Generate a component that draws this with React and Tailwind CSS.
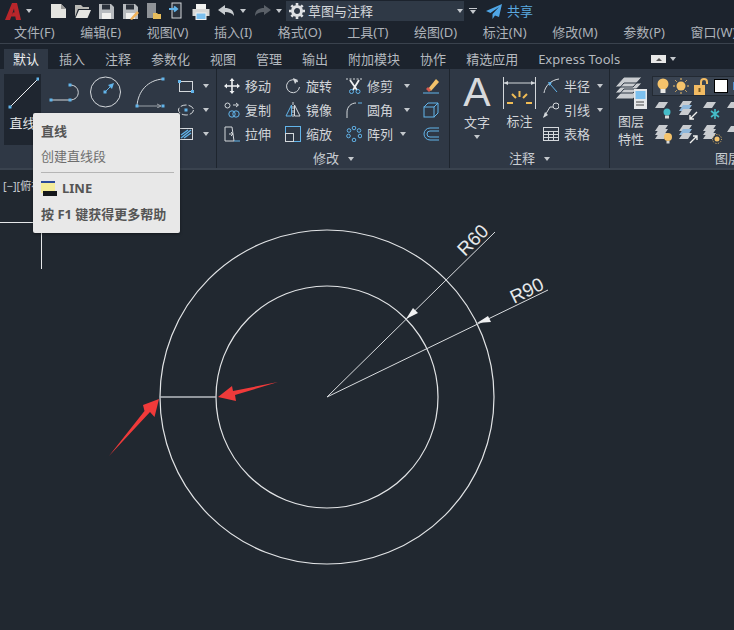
import React from "react";

const menus = ["文件(F)", "编辑(E)", "视图(V)", "插入(I)", "格式(O)", "工具(T)", "绘图(D)", "标注(N)", "修改(M)", "参数(P)", "窗口(W)"];
const tabs = ["插入", "注释", "参数化", "视图", "管理", "输出", "附加模块", "协作", "精选应用", "Express Tools"];

const BLUE = "#62b4ea";
const LINE = "#d4d8dc";

const Ico = ({ w = 16, h = 16, className = "", children }) => (
  <svg width={w} height={h} viewBox={`0 0 ${w} ${h}`} fill="none" stroke={LINE} strokeWidth="1" className={`shrink-0 ${className}`}>
    {children}
  </svg>
);

const Caret = ({ className = "" }) => (
  <span className={`inline-block w-0 h-0 border-x-[3.5px] border-x-transparent border-t-[4px] border-t-[#c4c8cd] ${className}`} />
);

const Grip = ({ x, y }) => <rect x={x - 1.5} y={y - 1.5} width="3" height="3" fill={BLUE} stroke="none" />;

const Logo = () => (
  <svg width="16" height="17" viewBox="0 0 16 17" className="shrink-0">
    <path d="M0 17 L7 0 H12 L16 17 H11 L10.3 13.5 H6 L8 9.5 H9.5 L9 5.5 L5 17 Z" fill="#b8262b" />
  </svg>
);

const NewDoc = () => (
  <Ico w={17} h={16}><path d="M1 1 H11 L16 6 V15 H1 Z" fill="#e4e4e0" stroke="none" /><path d="M11 1 V6 H16" fill="#9a9a98" stroke="none" /></Ico>
);
const OpenDoc = () => (
  <Ico w={17} h={16}><path d="M1 14 V2 H7 L9 4 H15 V6 H4 Z" fill="#b9b9b5" stroke="none" /><path d="M1.5 15 L5 7 H17 L13.5 15 Z" fill="#e6e6e2" stroke="none" /></Ico>
);
const Save = ({ pen }) => (
  <Ico w={17} h={17}>
    <path d="M1 1 H13 L16 4 V16 H1 Z" fill="#b7bbbf" stroke="none" />
    <rect x="4" y="1.5" width="8" height="5" fill="#2a313b" stroke="none" />
    <rect x="4" y="10" width="9" height="6" fill="#f0f0ee" stroke="none" />
    {pen && <path d="M8 16 L15 8 L17 10 L10 17 Z" fill="#f2b35a" stroke="none" />}
  </Ico>
);
const Phone = ({ folder }) => (
  <Ico w={16} h={18}>
    <rect x={folder ? 1 : 3} y="1" width="9" height="15" fill={folder ? "#8f9398" : "#2a313b"} stroke={folder ? "none" : "#d4d8dc"} />
    {folder ? <path d="M7 11 H11 L12 12 H15 V17 H7 Z" fill="#e8bd5c" stroke="none" /> : <path d="M0 7 H7 M5 4.5 L8 7 L5 9.5" stroke={BLUE} strokeWidth="2" />}
  </Ico>
);
const Printer = () => (
  <Ico w={18} h={17}>
    <rect x="4" y="1" width="10" height="5" fill="#f2f2f0" stroke="none" />
    <rect x="0.5" y="6" width="17" height="7" fill="#d8d8d6" stroke="none" />
    <rect x="4" y="10" width="10" height="6.5" fill="#7cc0ee" stroke="#f2f2f0" />
  </Ico>
);
const Undo = ({ redo }) => (
  <Ico w={17} h={12} className={redo ? "-scale-x-100" : ""}>
    <path d="M0 5 L7 0 V3 C12 3 16 5 16 11 C14 8 11 7 7 7 V10 Z" fill={redo ? "#5a6068" : "#c8ccd0"} stroke="none" />
  </Ico>
);
const Gear = () => (
  <svg width="16" height="16" viewBox="0 0 16 16" className="shrink-0">
    <circle cx="8" cy="8" r="4.5" fill="none" stroke="#dfe1e4" strokeWidth="3" />
    <path d="M8 0 V16 M0 8 H16 M2.3 2.3 L13.7 13.7 M13.7 2.3 L2.3 13.7" stroke="#dfe1e4" strokeWidth="2.6" strokeDasharray="2.6 10.8" />
  </svg>
);
const Plane = () => (
  <svg width="16" height="15" viewBox="0 0 16 15" className="shrink-0">
    <path d="M16 0 L0 7 L4.5 9 L13 3 L6.5 10 V15 L9 11.5 L13 13 Z" fill="#4fa6e6" />
  </svg>
);

const Tool = ({ icon, label, caret, w = "w-[62px]", capGap = "ml-[7px]" }) => (
  <div className={`flex items-center h-6 ${w}`}>
    <span className="w-[16px] h-[18px] flex items-center justify-center shrink-0">{icon}</span>
    <span className="ml-[5px] text-[13px] leading-none whitespace-nowrap text-[#d2d5d9]">{label}</span>
    {caret && <Caret className={capGap} />}
  </div>
);

const PanelTitle = ({ label, caret, className = "" }) => (
  <div className={`absolute bottom-0 h-[19px] flex items-center gap-[7px] whitespace-nowrap text-[13px] text-[#c9cdd2] leading-none ${className}`}>
    {label}
    {caret && <Caret className="ml-[2px]" />}
  </div>
);

const iconsMove = (
  <Ico><path d="M8 1 V15 M1 8 H15" strokeWidth="1.6" stroke="#eef0f2" /><path d="M8 0 L10.5 3 H5.5 Z M8 16 L10.5 13 H5.5 Z M0 8 L3 5.5 V10.5 Z M16 8 L13 5.5 V10.5 Z" fill="#eef0f2" stroke="none" /></Ico>
);
const iconsCopy = (
  <Ico><rect x="1" y="1" width="5" height="5" rx="2.5" /><circle cx="8" cy="12" r="3.2" stroke={BLUE} /><circle cx="12" cy="12" r="3.2" stroke={BLUE} /><path d="M9 3 H14 M12 1 L14.5 3 L12 5" /></Ico>
);
const iconsStretch = (
  <Ico><path d="M1 1 H8 L10 15 H1 Z" /><path d="M5 8 H9 M7 6 L9 8 L7 10" /><path d="M10 15 H16" stroke={BLUE} /></Ico>
);
const iconsRotate = (
  <Ico><path d="M13 4 A6.5 6.5 0 1 0 14.5 9" /><path d="M8 0 L13 2 L10 6 Z" fill={LINE} stroke="none" /></Ico>
);
const iconsMirror = (
  <Ico><path d="M8 0 V16" strokeDasharray="3 1" /><path d="M6.5 3 V14 H1 Z" stroke={BLUE} /><path d="M9.5 3 V14 H15 Z" /></Ico>
);
const iconsScale = (
  <Ico><rect x="0.5" y="0.5" width="15" height="15" stroke={BLUE} /><rect x="0.5" y="7.5" width="8" height="8" /></Ico>
);
const iconsTrim = (
  <Ico w={17}><path d="M0 1 H16" strokeDasharray="2 1.5" /><path d="M4 2 L11 12 M13 2 L7 12" strokeWidth="1.8" stroke="#eef0f2" /><circle cx="5.5" cy="13.5" r="2" stroke={BLUE} /><circle cx="12" cy="13.5" r="2" stroke={BLUE} /></Ico>
);
const iconsFillet = (
  <Ico><path d="M1 16 V10 C1 5 5 1 10 1" /><path d="M12 1 H16" stroke={BLUE} /></Ico>
);
const iconsArray = (
  <Ico>
    {[[8, 2], [13, 4.5], [14, 10], [8, 14], [2.5, 10], [3, 4.5]].map(([x, y], i) => (
      <circle key={i} cx={x} cy={y} r="1.8" stroke={BLUE} />
    ))}
  </Ico>
);
const iconsEraser = (
  <Ico w={17}><path d="M5 11 L13 1 L16 4 L8 13 Z" fill="#f2c26a" stroke="none" /><path d="M3 11 L5 9 L8 12 L6 14 Z" fill="#d8584e" stroke="none" /><path d="M0 15 H16" stroke={BLUE} /></Ico>
);
const iconsBox = (
  <Ico w={17}><rect x="1" y="5" width="10" height="10" stroke={BLUE} /><path d="M1 5 L5 1 H15 L11 5 M15 1 V11 L11 15" stroke={BLUE} /></Ico>
);
const iconsOffset = (
  <Ico w={17}><path d="M16 2 H7 A6 6 0 0 0 7 14 H16 M16 5 H7 A3 3 0 0 0 7 11 H16" stroke={BLUE} /></Ico>
);
const iconsRadius = (
  <Ico><path d="M1 15 C2 8 8 2 16 1" /><path d="M7 6 L14 14" stroke={BLUE} /><path d="M5 4 L9 4.5 L6.5 8 Z" fill={BLUE} stroke="none" /></Ico>
);
const iconsLeader = (
  <Ico><path d="M1 15 L7 5 H10" /><circle cx="13" cy="4" r="3" /><path d="M0 16 L2 10 L5 13 Z" fill={LINE} stroke="none" /></Ico>
);
const iconsTable = (
  <Ico><rect x="0.5" y="1.5" width="15" height="13" /><path d="M0.5 5.5 H15.5 M0.5 8.5 H15.5 M0.5 11.5 H15.5 M5.5 5.5 V14.5 M10.5 5.5 V14.5" /></Ico>
);

const Bulb = ({ color = "#f5c36b", base = "#e8e8e6" }) => (
  <svg width="14" height="16" viewBox="0 0 14 16" className="shrink-0">
    <circle cx="7" cy="6" r="5.5" fill={color} />
    <rect x="4.5" y="11" width="5" height="4" fill={base} />
  </svg>
);
const Sun = () => (
  <svg width="16" height="16" viewBox="0 0 16 16" className="ml-[3px] shrink-0">
    <circle cx="8" cy="8" r="4.5" fill="#f5c36b" />
    <path d="M8 0 V2 M8 14 V16 M0 8 H2 M14 8 H16 M2.3 2.3 L3.7 3.7 M12.3 12.3 L13.7 13.7 M13.7 2.3 L12.3 3.7 M3.7 12.3 L2.3 13.7" stroke="#f5c36b" />
  </svg>
);
const Lock = () => (
  <svg width="15" height="17" viewBox="0 0 15 17" className="ml-[5px] shrink-0">
    <rect x="0" y="7" width="11" height="10" fill="#f2bb63" />
    <path d="M7 7 V4 A3 3 0 0 1 13 4 V6" fill="none" stroke="#f2bb63" strokeWidth="2" />
    <rect x="4.5" y="10" width="2" height="4" fill="#7a5a20" />
  </svg>
);

const Plate = ({ y = 0, fill = "#c9ccd0" }) => (
  <path d={`M1 ${y + 6} L5 ${y} H14 L10 ${y + 6} Z`} fill={fill} />
);
const LayerSm = ({ badge }) => (
  <svg width="20" height="20" viewBox="0 0 20 20" className="shrink-0">
    {badge === "teal" && <><Plate y={1} /><circle cx="13" cy="11" r="3.5" fill="#45bcc8" /><rect x="11" y="14.5" width="4" height="3" fill="#d8d8d6" /></>}
    {badge === "snow" && <><Plate y={1} /><path d="M13 8 V18 M9 10 L17 16 M17 10 L9 16" stroke="#45bcc8" strokeWidth="1.6" /></>}
    {badge === "bulb" && <><Plate y={0} /><Plate y={4} /><Plate y={8} /><circle cx="14" cy="12" r="4" fill="#f5c36b" /><rect x="12.5" y="16" width="3" height="2.5" fill="#d8d8d6" /></>}
    {badge === "sun" && <><Plate y={0} /><Plate y={4} /><Plate y={8} /><circle cx="15" cy="14" r="2.5" fill="#f5c36b" /><circle cx="15" cy="14" r="4.5" fill="none" stroke="#f5c36b" strokeDasharray="1 1.5" /></>}
    {badge === "down" && <><Plate y={0} /><Plate y={4} fill="#8fb8dc" /><Plate y={8} /><path d="M19 11 L12 18 M12 14 V18 H16" stroke="#f0f0ee" strokeWidth="1.4" fill="none" /></>}
    {badge === "up" && <><Plate y={0} /><Plate y={4} fill="#8fb8dc" /><Plate y={8} /><path d="M12 18 L19 11 M15 11 H19 V15" stroke="#f0f0ee" strokeWidth="1.4" fill="none" /></>}
    {!badge && <Plate y={1} />}
  </svg>
);

const TopBar = () => (
  <div className="h-[22px] flex items-center pl-[5px] bg-[#1c232d]">
    <Logo />
    <Caret className="ml-[5px]" />
    <div className="ml-[18px] flex items-center gap-[7px]">
      <NewDoc />
      <OpenDoc />
      <Save />
      <Save pen />
      <Phone folder />
      <Phone />
      <Printer />
    </div>
    <span className="ml-[8px]"><Undo /></span>
    <Caret className="ml-[5px]" />
    <span className="ml-[8px]"><Undo redo /></span>
    <Caret className="ml-[5px]" />
    <div className="ml-[4px] w-[178px] h-[20px] flex items-center pl-[3px] pr-[1px] bg-[#2f3946]">
      <Gear />
      <span className="ml-[3px] text-[13px] leading-none text-[#d4d7db]">草图与注释</span>
      <Caret className="ml-auto" />
    </div>
    <div className="ml-[5px] flex flex-col items-center gap-[1px]">
      <span className="w-[8px] h-[1.5px] bg-[#c4c8cd]" />
      <Caret />
    </div>
    <span className="ml-[9px]"><Plane /></span>
    <span className="ml-[5px] text-[13px] leading-none text-[#5aa9e0]">共享</span>
  </div>
);

const MenuBar = () => (
  <div className="h-[22px] flex items-center pl-[14px] gap-[25.6px] bg-[#1c232d] border-b border-[#3a424d] whitespace-nowrap">
    {menus.map((m) => (
      <span key={m} className="text-[13px] leading-none text-[#adb2b9]">{m}</span>
    ))}
  </div>
);

const TabBar = () => (
  <div className="h-[25px] flex items-end pl-[4px] bg-[#1c232d] whitespace-nowrap">
    <div className="h-[20px] w-[44px] flex items-center justify-center bg-[#2f3845] text-[13px] leading-none text-[#eceef0]">默认</div>
    <div className="ml-[11px] h-[20px] flex items-center gap-[20px]">
      {tabs.map((t) => (
        <span key={t} className="text-[13px] leading-none text-[#b4b9bf]">{t}</span>
      ))}
    </div>
    <div className="ml-[31px] h-[20px] flex items-center">
      <span className="w-[15px] h-[8px] bg-[#e8e8e8] flex items-center justify-center">
        <span className="w-0 h-0 border-x-[3px] border-x-transparent border-b-[3px] border-b-[#555]" />
      </span>
      <Caret className="ml-[4px]" />
    </div>
  </div>
);

const DrawPanel = () => (
  <div className="relative w-[217px] shrink-0 border-r border-[#1e252e] flex pl-[4px] pt-[5px]">
    <div className="w-[37px] h-[71px] bg-[#1f2630] flex flex-col items-center pt-[3px] shrink-0">
      <svg width="33" height="33" viewBox="0 0 33 33" fill="none" className="shrink-0">
        <path d="M4 30 L33 1" stroke="#eef0f2" />
        <Grip x={4} y={30} />
        <Grip x={32} y={2} />
      </svg>
      <span className="mt-[7px] text-[13px] leading-none text-[#e4e6e8] whitespace-nowrap">直线</span>
    </div>
    <svg width="34" height="34" viewBox="0 0 34 34" fill="none" className="ml-[7px] mt-[5px] shrink-0" stroke={LINE}>
      <path d="M3 21 H22 M22 6 C33 6 33 21 22 21" />
      <Grip x={3} y={21} /><Grip x={22} y={21} /><Grip x={22} y={6} />
    </svg>
    <svg width="34" height="34" viewBox="0 0 34 34" fill="none" className="ml-[6px] shrink-0" stroke={LINE}>
      <circle cx="17.5" cy="18" r="15" />
      <path d="M17 18 L24 11" stroke={BLUE} />
      <path d="M26 9 L20 11 L24 15 Z" fill={BLUE} stroke="none" />
      <Grip x={17} y={18} />
    </svg>
    <svg width="36" height="34" viewBox="0 0 36 34" fill="none" className="ml-[10px] shrink-0" stroke={LINE}>
      <path d="M5 32 C6 17 16 6 31 5" />
      <path d="M5 32 H29 M25 30 L29 32 L25 34" stroke="#9aa0a8" />
      <Grip x={5} y={32} /><Grip x={31} y={5} /><Grip x={31} y={32} />
    </svg>
    <div className="ml-[10px] flex flex-col">
      <div className="flex items-center h-6 gap-[9px]">
        <Ico><rect x="1.5" y="3.5" width="13" height="10" /><Grip x={1.5} y={3.5} /><Grip x={14.5} y={13.5} /></Ico>
        <Caret />
      </div>
      <div className="flex items-center h-6 gap-[9px]">
        <Ico><ellipse cx="8" cy="8" rx="7.5" ry="5" strokeDasharray="6 2" /><Grip x={8} y={8} /></Ico>
        <Caret />
      </div>
      <div className="flex items-center h-6 gap-[9px]">
        <Ico><rect x="1.5" y="2.5" width="13" height="11" /><path d="M3 12 L13 4 M3 9 L10 4 M6 12 L13 7" stroke={BLUE} strokeWidth="1.4" /></Ico>
        <Caret />
      </div>
    </div>
  </div>
);

const ModifyPanel = () => (
  <div className="relative w-[233px] shrink-0 border-r border-[#1e252e] flex pl-[7px] pt-[5px]">
    <div className="w-[61px] shrink-0">
      <Tool icon={iconsMove} label="移动" />
      <Tool icon={iconsCopy} label="复制" />
      <Tool icon={iconsStretch} label="拉伸" />
    </div>
    <div className="w-[61px] shrink-0">
      <Tool icon={iconsRotate} label="旋转" />
      <Tool icon={iconsMirror} label="镜像" />
      <Tool icon={iconsScale} label="缩放" />
    </div>
    <div className="w-[77px] shrink-0">
      <Tool w="w-[77px]" icon={iconsTrim} label="修剪" caret capGap="ml-[11px]" />
      <Tool w="w-[77px]" icon={iconsFillet} label="圆角" caret capGap="ml-[11px]" />
      <Tool w="w-[77px]" icon={iconsArray} label="阵列" caret capGap="ml-[7px]" />
    </div>
    <div className="flex flex-col">
      <div className="h-6 flex items-center">{iconsEraser}</div>
      <div className="h-6 flex items-center">{iconsBox}</div>
      <div className="h-6 flex items-center">{iconsOffset}</div>
    </div>
    <PanelTitle label="修改" caret className="left-[96px]" />
  </div>
);

const AnnotatePanel = () => (
  <div className="relative w-[160px] shrink-0 border-r border-[#1e252e] flex pl-[13px]">
    <div className="w-[28px] flex flex-col items-center shrink-0 pt-[5px]">
      <span className="h-[36px] text-[41px] leading-[36px] font-['Liberation_Sans',sans-serif] text-[#d7d9dc]">A</span>
      <span className="mt-[6px] text-[13px] leading-none text-[#d2d5d9] whitespace-nowrap">文字</span>
      <Caret className="mt-[6px]" />
    </div>
    <div className="ml-[12px] w-[33px] flex flex-col items-center shrink-0 pt-[8px]">
      <svg width="33" height="32" viewBox="0 0 33 32" fill="none" stroke={LINE} className="shrink-0">
        <path d="M0.5 0 V32 M32.5 0 V32 M1 6 H32" />
        <path d="M1 6 L5 4 V8 Z M32 6 L28 4 V8 Z" fill={LINE} stroke="none" />
        <path d="M16.5 14 V20 M9 17 L13 21 M24 17 L20 21 M4 26 H10 M23 26 H29" stroke="#f0bc55" strokeWidth="2" />
      </svg>
      <span className="mt-[6px] text-[13px] leading-none text-[#d2d5d9] whitespace-nowrap">标注</span>
    </div>
    <div className="ml-[7px] pt-[5px]">
      <Tool w="w-[64px]" icon={iconsRadius} label="半径" caret capGap="ml-[7px]" />
      <Tool w="w-[64px]" icon={iconsLeader} label="引线" caret capGap="ml-[7px]" />
      <Tool w="w-[64px]" icon={iconsTable} label="表格" />
    </div>
    <PanelTitle label="注释" caret className="left-[59px]" />
  </div>
);

const LayerPanel = () => (
  <div className="relative flex-1 flex pl-[5px] overflow-hidden">
    <div className="w-[32px] h-[77px] flex flex-col items-center shrink-0 pt-[7px] overflow-hidden">
      <svg width="32" height="35" viewBox="0 0 32 35" className="shrink-0">
        <path d="M0 11 L9 1 H27 L18 11 Z M0 17 L9 7 H27 L18 17 Z M0 23 L9 13 H27 L18 23 Z" fill="#c9ccd0" stroke="#2f3845" />
        <rect x="19" y="13" width="13" height="20" fill="#e6e8ea" />
        <rect x="20.5" y="15" width="10" height="8" fill="#7cc0ee" />
        <path d="M21 26 H29 M21 29 H29" stroke="#444" />
      </svg>
      <span className="mt-[4px] text-[13px] leading-none text-[#d2d5d9] whitespace-nowrap">图层</span>
      <span className="mt-[5px] text-[13px] leading-none text-[#d2d5d9] whitespace-nowrap">特性</span>
    </div>
    <div className="ml-[5px] pt-[7px] w-[90px] shrink-0">
      <div className="w-[90px] h-[20px] flex items-center pl-[3px] bg-[#3a4452] border border-[#232a33]">
        <Bulb />
        <Sun />
        <Lock />
        <span className="ml-[5px] w-[14px] h-[14px] bg-white border border-black shrink-0" />
        <span className="ml-[5px] w-[8px] h-[8px] bg-[#4f8fd0] shrink-0" />
      </div>
      <div className="mt-[5px] pl-[2px] flex gap-[4px]">
        <LayerSm badge="teal" />
        <LayerSm badge="down" />
        <LayerSm badge="snow" />
        <LayerSm />
      </div>
      <div className="mt-[4px] pl-[2px] flex gap-[4px]">
        <LayerSm badge="bulb" />
        <LayerSm badge="up" />
        <LayerSm badge="sun" />
        <LayerSm />
      </div>
    </div>
    <PanelTitle label="图层" className="left-[105px]" />
  </div>
);

const Canvas = () => (
  <div className="relative flex-1 bg-[#212830] overflow-hidden">
    <span className="absolute left-[3px] top-[10px] text-[11px] leading-none text-[#c8ccd0] whitespace-nowrap">[−][俯视]</span>
    <svg viewBox="0 170 734 460" className="block w-full h-full" fill="none">
      <path d="M0 222.5 H41.5 M41.5 222 V269" stroke="#e6e8ea" />
      <circle cx="327" cy="397" r="167" stroke="#e2e4e6" strokeWidth="1.2" />
      <circle cx="327" cy="397" r="111" stroke="#e2e4e6" strokeWidth="1.2" />
      <path d="M160 397 H216" stroke="#b9bdc2" strokeWidth="1.4" />
      <path d="M327 397 L495 232" stroke="#d9dcdf" />
      <path d="M327 397 L548 290" stroke="#d9dcdf" />
      <path d="M406 319 L413 308 L418 313 Z" fill="#f0f1f2" />
      <path d="M477 323 L488 316 L491 322 Z" fill="#f0f1f2" />
      <text x="0" y="0" transform="translate(465 257) rotate(-45)" fill="#e6e8ea" fontSize="19" fontFamily="Liberation Sans, sans-serif">R60</text>
      <text x="0" y="0" transform="translate(514 304) rotate(-26)" fill="#e6e8ea" fontSize="19" fontFamily="Liberation Sans, sans-serif">R90</text>
      <path d="M159 399 L143 405 L144.5 411 L109 456 L150 412 L154.5 417 Z" fill="#f03a3a" />
      <path d="M218 397 L232 386 L233 391 L278 382 L235 395 L236 401 Z" fill="#f03a3a" />
    </svg>
  </div>
);

const Tooltip = () => (
  <div className="absolute left-[33px] top-[113px] w-[147px] h-[120px] rounded-[2px] bg-[#e8e8e8] shadow-[0_1px_3px_rgba(0,0,0,0.4)] pl-[8px] pr-[6px] pt-[10px]">
    <div className="text-[13px] leading-[16px] font-bold text-[#555]">直线</div>
    <div className="mt-[9px] text-[13px] leading-[16px] text-[#6e6e6e]">创建直线段</div>
    <div className="mt-[8px] h-px bg-[#b5b5b5]" />
    <div className="mt-[7px] flex items-center gap-[5px]">
      <svg width="16" height="15" viewBox="0 0 16 15" className="shrink-0">
        <rect width="14" height="12" fill="#f4ec9a" />
        <rect width="14" height="2" fill="#2c4a9a" />
        <rect x="2" y="10" width="14" height="5" fill="#15181c" />
      </svg>
      <span className="text-[13px] leading-[16px] font-bold text-[#555]">LINE</span>
    </div>
    <div className="mt-[10px] text-[13px] leading-[16px] font-bold text-[#555] whitespace-nowrap">按 F1 键获得更多帮助</div>
  </div>
);

export default function App() {
  return (
    <div className="relative w-[734px] h-[630px] overflow-hidden flex flex-col bg-[#212830] font-['Noto_Sans','Noto_Sans_CJK_SC',sans-serif]">
      <TopBar />
      <MenuBar />
      <TabBar />
      <div className="h-[101px] flex bg-[#2f3845] border-b-2 border-[#3a434f] shrink-0">
        <DrawPanel />
        <ModifyPanel />
        <AnnotatePanel />
        <LayerPanel />
      </div>
      <Canvas />
      <Tooltip />
    </div>
  );
}
